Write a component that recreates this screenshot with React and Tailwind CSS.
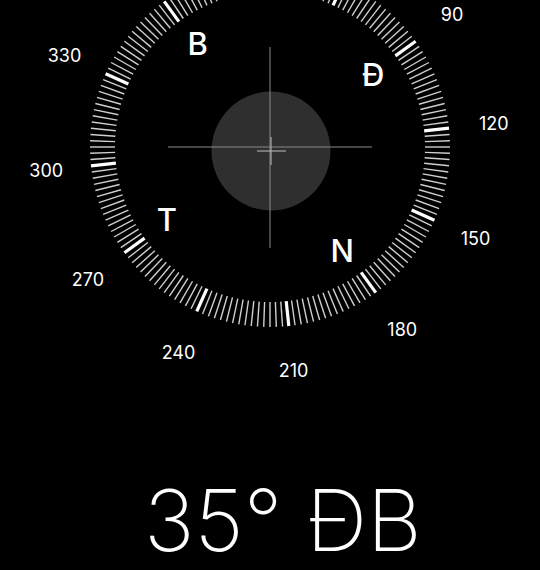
const CX = 270;
const CY = 147;

function polar(r, deg) {
  const a = (deg * Math.PI) / 180;
  return [CX + r * Math.sin(a), CY - r * Math.cos(a)];
}

// dial rotation (heading shown below is 35°)
const ROT = 36;

const ticks = Array.from({ length: 180 }, (_, i) => i * 2);
// 0, 30 and 60 sit above the top edge
const degLabels = [90, 120, 150, 180, 210, 240, 270, 300, 330];
const cardinals = [
  { t: "B", d: 0 },
  { t: "Đ", d: 90 },
  { t: "N", d: 180 },
  { t: "T", d: 270 },
];

function Dial() {
  return (
    <svg width="540" height="440" viewBox="0 0 540 440" className="block">
      {ticks.map((d) => {
        const major = d % 30 === 0;
        const [x1, y1] = polar(155, d - ROT);
        const [x2, y2] = polar(180, d - ROT);
        return (
          <line
            key={d}
            x1={x1}
            y1={y1}
            x2={x2}
            y2={y2}
            stroke={major ? "#ffffff" : "#cfcfcf"}
            strokeWidth={major ? 3.2 : 1.4}
          />
        );
      })}
      {degLabels.map((d) => {
        const [x, y] = polar(225, d - ROT);
        return (
          <text
            key={d}
            x={x}
            y={y}
            fill="#ffffff"
            fontSize="18"
            textAnchor="middle"
            dominantBaseline="central"
            style={{ fontFamily: "Inter, 'Liberation Sans', sans-serif" }}
          >
            {d}
          </text>
        );
      })}
      {cardinals.map((c) => {
        const [x, y] = polar(126, c.d - ROT + 1);
        return (
          <text
            key={c.t}
            x={x}
            y={y}
            fill="#ffffff"
            fontSize="31"
            fontWeight="500"
            textAnchor="middle"
            dominantBaseline="central"
            style={{ fontFamily: "Inter, 'Liberation Sans', sans-serif" }}
          >
            {c.t}
          </text>
        );
      })}
      {/* level bubble */}
      <circle cx="271" cy="151" r="59.5" fill="#2f2f2f" />
      {/* fixed crosshair */}
      <line x1="168" y1="147" x2="372" y2="147" stroke="#8a8a8a" strokeWidth="1" />
      <line x1="270" y1="47" x2="270" y2="248" stroke="#8a8a8a" strokeWidth="1" />
      {/* bubble crosshair */}
      <line x1="257" y1="151" x2="286" y2="151" stroke="#a8a8a8" strokeWidth="1.2" />
      <line x1="271" y1="137" x2="271" y2="165" stroke="#a8a8a8" strokeWidth="1.2" />
    </svg>
  );
}

export default function App() {
  return (
    <div className="w-[540px] h-[570px] bg-black overflow-hidden flex flex-col">
      <Dial />
      <div className="flex justify-center pl-[26px] mt-[38px]">
        <span className="text-white text-[85px] font-extralight leading-none font-['Inter','Liberation_Sans',sans-serif]">
          35° ĐB
        </span>
      </div>
    </div>
  );
}
